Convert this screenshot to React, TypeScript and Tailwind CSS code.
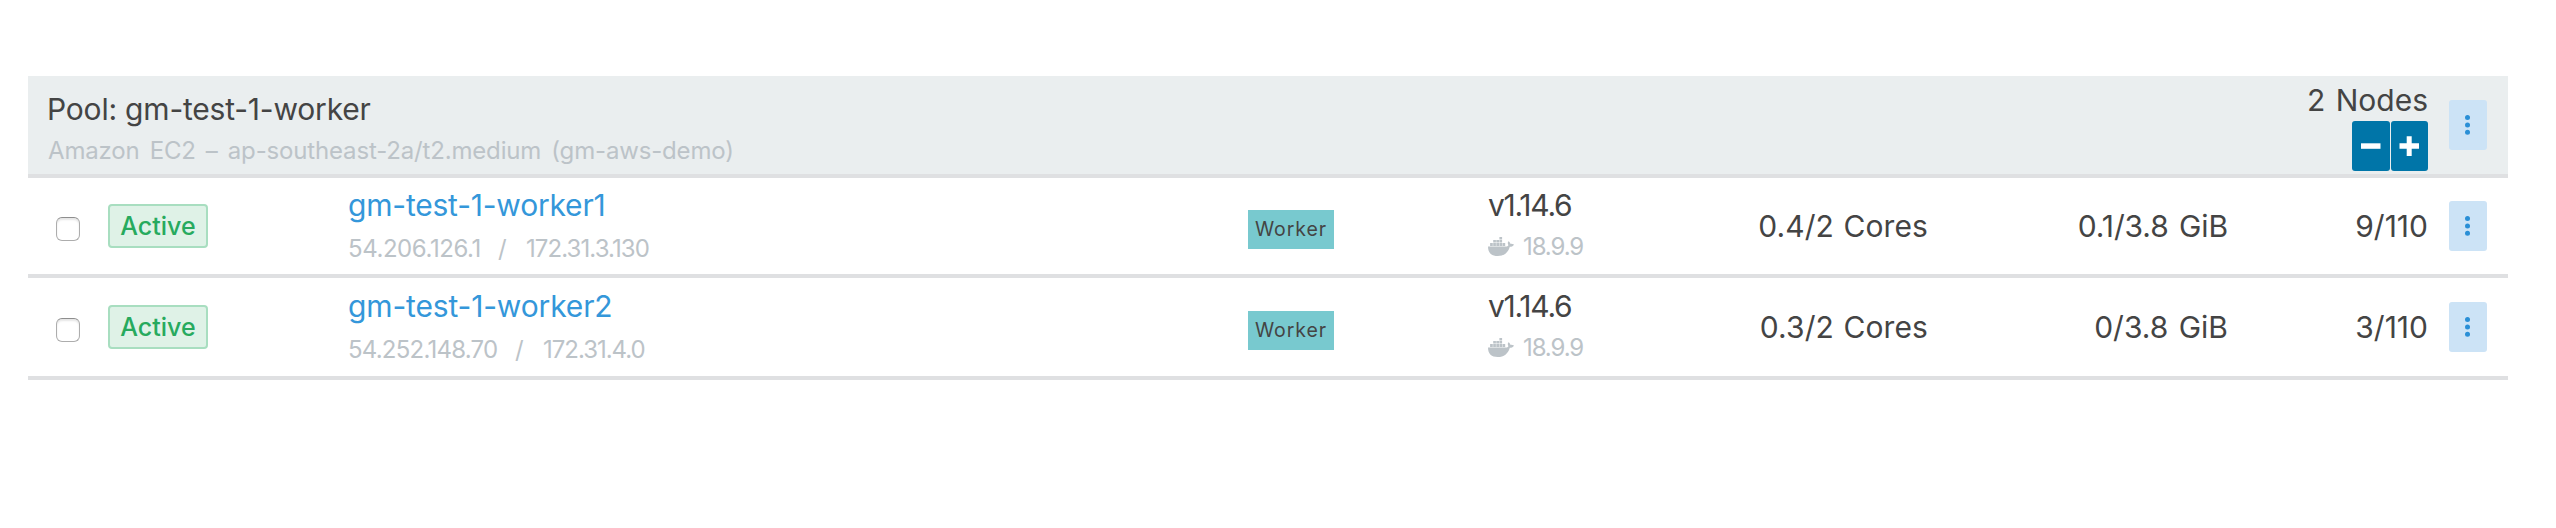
import type { ReactNode } from "react";

const COLS = "grid grid-cols-[80px_239px_901px_240px_180px_260px_300px_200px_80px]";

type Spaced = { text: string; spacing: string };

type Node = {
  name: Spaced;
  external: Spaced;
  internal: Spaced;
  cpu: Spaced;
  memory: Spaced;
  pods: Spaced;
  row: string;
};

const nodes: Node[] = [
  {
    name: { text: "gm-test-1-worker1", spacing: "tracking-[-0.2px]" },
    external: { text: "54.206.126.1", spacing: "w-[150px] tracking-[-0.43px]" },
    internal: { text: "172.31.3.130", spacing: "tracking-[-0.92px]" },
    cpu: { text: "0.4/2 Cores", spacing: "[word-spacing:1px] tracking-[0.1px]" },
    memory: { text: "0.1/3.8 GiB", spacing: "[word-spacing:2px] tracking-[-0.1px]" },
    pods: { text: "9/110", spacing: "" },
    row: "h-[100px]",
  },
  {
    name: { text: "gm-test-1-worker2", spacing: "tracking-[-0.15px]" },
    external: { text: "54.252.148.70", spacing: "w-[167px] tracking-[-0.78px]" },
    internal: { text: "172.31.4.0", spacing: "tracking-[-1.02px]" },
    cpu: { text: "0.3/2 Cores", spacing: "[word-spacing:1px] tracking-[0.1px]" },
    memory: { text: "0/3.8 GiB", spacing: "[word-spacing:2px]" },
    pods: { text: "3/110", spacing: "" },
    row: "h-[102px] pt-px",
  },
];

function DockerIcon() {
  return (
    <svg viewBox="0 0 26 20" className="h-5 w-[26px] shrink-0 fill-[#bcc3c8]">
      <path d="M0 9.500h19c1.200-.3 1.500-1 1.200-1.900-.6-1-.6-2.300.3-3.400 1.200.6 1.700 1.600 1.800 2.600 1.100-.2 2.500 0 3.700.6-.7 1.500-2 2.300-4.200 2.300C20 15.800 16 19 9.800 19 3.500 19 0 16 0 9.500z" />
      <path d="M2.100 6h2.700v2.900H2.100zM5.200 6h2.700v2.900H5.200zM8.300 6H11v2.900H8.300zM11.400 6h2.700v2.900h-2.700zM14.500 6h2.700v2.900h-2.700zM5.200 3h2.700v2.600H5.200zM8.300 3H11v2.600H8.300zM11.400 3h2.700v2.600h-2.700zM11.400 0h2.700v2.600h-2.700z" />
    </svg>
  );
}

function ActionButton() {
  return (
    <button className="ml-[21px] flex h-[50px] w-[38px] items-center justify-center rounded-[3px] bg-[#cce3f6]">
      <svg viewBox="0 0 38 50" className="h-[50px] w-[38px] fill-[#2a8fd6]">
        <circle cx="18.500" cy="17.600" r="2.500" />
        <circle cx="18.500" cy="24.900" r="2.500" />
        <circle cx="18.500" cy="32.200" r="2.500" />
      </svg>
    </button>
  );
}

function Metric({ value }: { value: Spaced }) {
  return (
    <div className={`pt-7 text-right text-[30px] leading-10 ${value.spacing}`}>{value.text}</div>
  );
}

function ScaleButton({ className, children }: { className: string; children: ReactNode }) {
  return (
    <button className={`h-[50px] rounded-[3px] bg-[#0075a8] ${className}`}>
      <svg viewBox="0 0 38 50" className="h-[50px] w-[38px] fill-white">
        {children}
      </svg>
    </button>
  );
}

function NodeRow({ node }: { node: Node }) {
  return (
    <div className={`${COLS} border-b-4 border-[#dfe0e2] ${node.row}`}>
      <div className="pt-[39px] pl-7">
        <input
          type="checkbox"
          className="block size-6 appearance-none rounded-[6px] border border-[#adadad] border-t-[#8e8e8e] bg-white shadow-[inset_0_2px_2px_rgba(0,0,0,0.1)]"
        />
      </div>
      <div className="pt-[26px]">
        <span className="flex h-11 w-[100px] items-center justify-center rounded-[4px] border-2 border-[#a8dec0] bg-[#dff2e7] pt-0.5 text-[25px] font-[450] text-[#27aa5e]">
          Active
        </span>
      </div>
      <div className="pt-[7px] pl-px">
        <a className={`block text-[30px] leading-10 text-[#3497da] ${node.name.spacing}`}>{node.name.text}</a>
        <div className="mt-2 flex text-[24px] leading-8 text-[#bcc3c8]">
          <span className={node.external.spacing}>{node.external.text}</span>
          <span className="w-7">/</span>
          <span className={node.internal.spacing}>{node.internal.text}</span>
        </div>
      </div>
      <div className="pt-8">
        <span className="flex h-[39px] w-[86px] items-center justify-center bg-[#78c9cf] text-[19.500px] tracking-[0.95px] text-[#444]">
          Worker
        </span>
      </div>
      <div className="pt-[7px]">
        <div className="text-[30px] leading-10 tracking-[-1.250px]">v1.14.6</div>
        <div className="mt-1.5 flex items-center text-[24px] leading-8 tracking-[-1.1px] text-[#bcc3c8]">
          <DockerIcon />
          <span className="ml-[9px]">18.9.9</span>
        </div>
      </div>
      <Metric value={node.cpu} />
      <Metric value={node.memory} />
      <Metric value={node.pods} />
      <div className="pt-[23px]">
        <ActionButton />
      </div>
    </div>
  );
}

export default function App() {
  return (
    <div className="h-[528px] w-[2556px] bg-white pt-[76px] pl-7 font-['Inter',sans-serif] whitespace-nowrap text-[#444]">
      <div className="w-[2480px]">
        <div className="flex h-[102px] border-b-4 border-[#dfe0e2] bg-[#eaeeef]">
          <div className="flex-1 pt-[13px] pl-[19px]">
            <div className="text-[30px] leading-10 tracking-[-0.2px]">Pool: gm-test-1-worker</div>
            <div className="mt-1.5 pl-px text-[24px] leading-8 tracking-[-0.160px] text-[#bcc3c8] [word-spacing:3.5px]">
              Amazon EC2 – ap-southeast-2a/t2.medium (gm-aws-demo)
            </div>
          </div>
          <div className="flex flex-col items-end pt-1">
            <div className="text-[30px] leading-10 [word-spacing:2px]">2 Nodes</div>
            <div className="mt-px flex gap-px">
              <ScaleButton className="w-[38px]">
                <path d="M9 22.300h19.500v5.500H9z" />
              </ScaleButton>
              <ScaleButton className="w-[37px] overflow-hidden">
                <path d="M8.500 22.300h7.200V15.200h5v7.100h7.300v5.500h-7.300v7.100h-5v-7.100H8.500z" />
              </ScaleButton>
            </div>
          </div>
          <div className="w-20 pt-6">
            <ActionButton />
          </div>
        </div>
        {nodes.map((node) => (
          <NodeRow key={node.name.text} node={node} />
        ))}
      </div>
    </div>
  );
}
